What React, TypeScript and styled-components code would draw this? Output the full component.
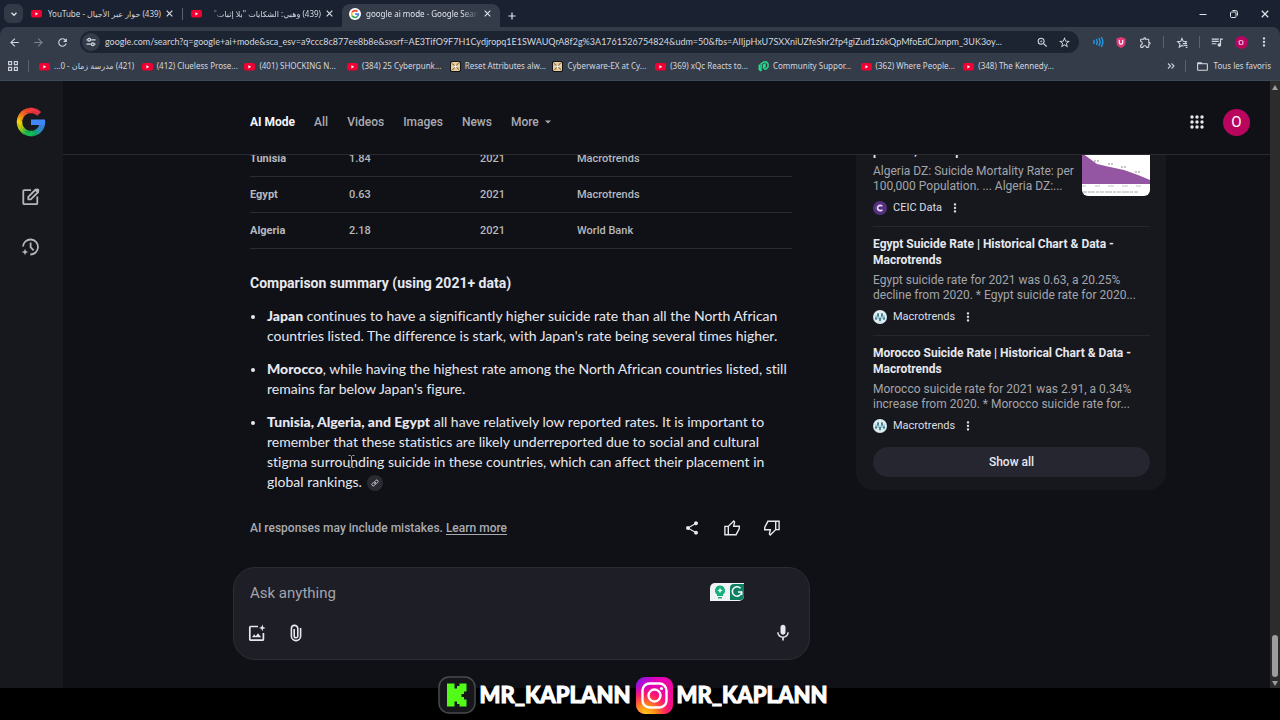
import React from "react";
import styled, { createGlobalStyle, css } from "styled-components";
import {
  MdArrowBack,
  MdArrowForward,
  MdFolderOpen,
  MdMic,
  MdMoreVert,
  MdOutlineExtension,
  MdQueueMusic,
  MdRefresh,
  MdShare,
  MdStarBorder,
  MdZoomIn,
} from "react-icons/md";

const chromeFont = '"Noto Sans", "DejaVu Sans", sans-serif';
const addressFont = "Lato, sans-serif";
const pageFont = 'Roboto, "Liberation Sans", sans-serif';
const articleFont = "Lato, sans-serif";

const GlobalStyle = createGlobalStyle`
  * { box-sizing: border-box; }
  body { margin: 0; background: #000; color: #e6e8f0; font-family: ${pageFont}; }
  button { border: 0; padding: 0; background: none; color: inherit; font: inherit; cursor: pointer; }
  a { color: inherit; text-decoration: none; }
  ul, h2, h3, p { margin: 0; padding: 0; }
  svg { display: block; flex: none; }
`;

const Screen = styled.div`
  position: relative;
  display: flex;
  flex-direction: column;
  min-height: 100vh;
  padding-bottom: 32px;
  overflow: hidden;
`;

/* ---------- browser chrome ---------- */

const BrowserChrome = styled.header`
  background: #1a2231;
  color: #d3d7df;
  font-family: ${chromeFont};
  font-size: 8px;
  line-height: 14px;
`;

const TabStrip = styled.div`
  display: flex;
  align-items: flex-end;
  height: 27px;
  padding-left: 4px;
`;

const TabSearch = styled.button`
  display: grid;
  place-items: center;
  width: 19px;
  height: 19px;
  margin-bottom: 4px;
  border-radius: 6px;
  background: #323a47;
`;

const Tab = styled.div<{ $active?: boolean }>`
  display: flex;
  align-items: center;
  gap: 5px;
  width: ${(p) => (p.$active ? 158 : 159)}px;
  height: 23px;
  padding: 0 9px 4px 8px;
  border-radius: 8px 8px 0 0;
  ${(p) =>
    p.$active &&
    css`
      padding-left: 7px;
      background: #343c4a;
      color: #e2e5ec;
    `}
`;

const TabTitle = styled.span<{ $fade?: "left" | "right" }>`
  flex: 1;
  min-width: 0;
  overflow: hidden;
  white-space: nowrap;
  ${(p) =>
    p.$fade &&
    css`
      mask-image: linear-gradient(to ${p.$fade}, #000 85%, transparent);
    `}
`;

const IconButton = styled.button<{ $size?: number }>`
  display: grid;
  place-items: center;
  flex: none;
  width: ${(p) => p.$size ?? 24}px;
  height: ${(p) => p.$size ?? 24}px;
`;

const WindowControls = styled.div`
  display: flex;
  align-items: center;
  gap: 17px;
  margin: 0 8px 6px auto;
`;

const Toolbar = styled.div`
  display: flex;
  align-items: center;
  height: 30px;
  padding: 0 5px 0 2px;
  border-radius: 8px 8px 0 0;
  background: #343c4a;
`;

const AddressBar = styled.div`
  display: flex;
  align-items: center;
  flex: 1;
  min-width: 0;
  height: 22px;
  margin: 0 8px 0 6px;
  padding: 0 4px 0 2px;
  border-radius: 11px;
  background: #1c2432;
`;

const SiteInfo = styled.button`
  display: grid;
  place-items: center;
  width: 18px;
  height: 18px;
  margin-right: 5px;
  border-radius: 50%;
  background: #343c4a;
`;

const Address = styled.input`
  flex: 1;
  min-width: 0;
  margin-right: 5px;
  padding: 0;
  border: 0;
  outline: 0;
  background: none;
  color: #d3d7df;
  font: 9px/16px ${addressFont};
  font-variant-ligatures: none;
  text-overflow: ellipsis;
`;

const Separator = styled.span<{ $gap?: number }>`
  flex: none;
  width: 1px;
  height: 12px;
  margin: 0 ${(p) => p.$gap ?? 6}px;
  background: #5a6270;
`;

const TabSeparator = styled(Separator)`
  margin: 0 0 7px;
`;

const ProfileDot = styled.button<{ $large?: boolean }>`
  display: grid;
  place-items: center;
  flex: none;
  width: ${(p) => (p.$large ? 27 : 13)}px;
  height: ${(p) => (p.$large ? 27 : 13)}px;
  border-radius: 50%;
  background: #b9055e;
  color: #fff;
  font: ${(p) => (p.$large ? "15px" : "8px")} ${pageFont};
`;

const BookmarksBar = styled.nav`
  display: flex;
  align-items: center;
  height: 24px;
  padding: 0 9px 5px 8px;
  border-bottom: 1px solid #3d4858;
  background: #343c4a;
`;

const BookmarkList = styled.div`
  display: grid;
  grid-template-columns: repeat(10, minmax(0, 1fr));
  flex: 0 1 1027px;
`;

const Bookmark = styled.a`
  display: flex;
  align-items: center;
  gap: 4px;
  min-width: 0;
  white-space: nowrap;
`;

const BookmarkTools = styled.div`
  display: flex;
  align-items: center;
  gap: 5px;
  margin-left: auto;
`;

/* ---------- page ---------- */

const Page = styled.div`
  display: flex;
  flex: 1;
  min-height: 0;
  background: #101116;
`;

const Rail = styled.nav`
  display: flex;
  flex-direction: column;
  align-items: center;
  width: 63px;
  padding: 26px 2px 0 0;
  background: #17181d;
  color: #b4b6bd;
`;

const RailButton = styled(IconButton)`
  margin-top: 26px;
`;

const RailLogo = styled.a`
  margin-bottom: 22px;
`;

const Content = styled.div`
  display: flex;
  flex-direction: column;
  flex: 1;
  min-width: 0;
`;

const SearchHeader = styled.header`
  display: flex;
  align-items: center;
  height: 74px;
  padding: 9px 20px 0 187px;
  border-bottom: 1px solid #292b30;
`;

const SearchTabs = styled.nav`
  display: flex;
  gap: 19px;
  margin-right: auto;
  color: #a9abb2;
  font-size: 12px;
  line-height: 16px;
`;

const SearchTab = styled.a<{ $active?: boolean }>`
  display: flex;
  align-items: center;
  gap: 6px;
  color: ${(p) => (p.$active ? "#f4f5fa" : "inherit")};
  font-weight: ${(p) => (p.$active ? 700 : 500)};
`;

const HeaderTools = styled.div`
  display: flex;
  align-items: center;
  gap: 14px;
`;

const Results = styled.main`
  display: grid;
  grid-template-columns: minmax(0, 1fr) 310px;
  align-items: start;
  gap: 46px;
  flex: 1;
  padding: 0 104px 28px 170px;
  overflow: hidden;
`;

const Answer = styled.article`
  margin-top: -15px;
`;

const AnswerBody = styled.div`
  padding: 0 18px 0 17px;
`;

const RateTable = styled.table`
  width: 100%;
  border-collapse: collapse;
  table-layout: fixed;
  color: #b6b8bf;
  font-size: 11px;
  line-height: 14px;
  text-align: left;

  th,
  td {
    height: 36px;
    padding: 2px 0 0;
    border-bottom: 1px solid #2a2c31;
    font-weight: 500;
  }
  th { font-weight: 700; }
`;

const Column = styled.col<{ $width?: number }>`
  width: ${(p) => (p.$width ? `${p.$width}px` : "auto")};
`;

const Heading = styled.h2`
  margin-top: 24px;
  font: 700 14px/20px ${pageFont};
`;

const Points = styled.ul`
  display: flex;
  flex-direction: column;
  gap: 13px;
  margin-top: 13px;
  padding-left: 17px;
  font: 14px/20px ${articleFont};
  font-variant-ligatures: none;
  list-style: none;

  b { font-weight: 900; }
`;

const Point = styled.li`
  position: relative;

  &::before {
    content: "";
    position: absolute;
    top: 9px;
    left: -16px;
    width: 4px;
    height: 4px;
    border-radius: 50%;
    background: #e6e8f0;
  }
`;

const LinkChip = styled.button`
  display: inline-grid;
  place-items: center;
  width: 16px;
  height: 16px;
  margin-left: 5px;
  border-radius: 50%;
  background: #292a32;
  vertical-align: middle;
`;

const TextCursor = styled.svg`
  position: absolute;
  top: 43px;
  left: 81px;
`;

const Feedback = styled.div`
  display: flex;
  align-items: center;
  justify-content: space-between;
  margin: 24px 0 27px;
  padding-right: 8px;
  color: #a9abb2;
  font-size: 12px;
  font-weight: 500;
  line-height: 16px;

  a { text-decoration: underline; text-underline-offset: 2px; }
`;

const FeedbackActions = styled.div`
  display: flex;
  gap: 16px;
  color: #e6e8f0;
`;

const Composer = styled.form`
  display: flex;
  flex-direction: column;
  justify-content: space-between;
  height: 93px;
  padding: 13px 14px 14px 11px;
  border: 1px solid #2b2c35;
  border-radius: 22px;
  background: #1e1e27;
`;

const ComposerRow = styled.div`
  display: flex;
  align-items: center;
  gap: 15px;
`;

const Prompt = styled.input`
  flex: 1;
  min-width: 0;
  height: 24px;
  padding: 0 0 0 5px;
  border: 0;
  outline: 0;
  background: none;
  color: #e6e8f0;
  font: 15px/24px ${pageFont};

  &::placeholder { color: #a3a4ae; opacity: 1; }
`;

const WritingBadge = styled.button`
  display: flex;
  align-items: center;
  gap: 4px;
  height: 18px;
  margin: 0 51px 2px 0;
  padding-left: 4px;
  border-radius: 5px 0 5px 0;
  background: #f1f3f4;
  overflow: hidden;
`;

const MicButton = styled(IconButton)`
  margin-left: auto;
`;

/* ---------- sources ---------- */

const Sources = styled.aside`
  margin-top: -12px;
  padding: 0 16px 13px 17px;
  border-radius: 0 0 18px 18px;
  background: #17181d;
`;

const Source = styled.section`
  display: flex;
  justify-content: space-between;
  padding-bottom: 11px;

  & + & {
    padding-top: 9px;
    border-top: 1px solid #25272c;
  }
`;

const SourceText = styled.div<{ $narrow?: boolean }>`
  min-width: 0;
  width: ${(p) => (p.$narrow ? "204px" : "100%")};
`;

const SourceTitle = styled.h3`
  font-size: 12px;
  font-weight: 700;
  line-height: 16px;
`;

const SourceSnippet = styled.p`
  margin-top: 5px;
  color: #a3a5ac;
  font-size: 12px;
  line-height: 15px;
`;

const SourceSite = styled.div`
  display: flex;
  align-items: center;
  gap: 6px;
  height: 14px;
  margin-top: 7px;
  color: #dcdee6;
  font-size: 11px;
  line-height: 14px;
`;

const Thumbnail = styled.svg`
  border-radius: 0 0 6px 6px;
`;

const ShowAll = styled.button`
  display: block;
  width: 100%;
  height: 30px;
  margin-top: 3px;
  border-radius: 15px;
  background: #25262f;
  font-size: 12px;
  font-weight: 500;
`;

/* ---------- scroll bar and stream banner ---------- */

const ScrollTrack = styled.div`
  display: flex;
  flex-direction: column;
  align-items: center;
  width: 10px;
  padding: 4px 0 2px;
  background: #2c2c2d;
`;

const ScrollThumb = styled.div`
  width: 6px;
  height: 42px;
  margin: auto 0 4px;
  border-radius: 3px;
  background: #9d9d9e;
`;

const StreamBanner = styled.footer`
  position: absolute;
  right: 14px;
  bottom: 6px;
  left: 0;
  display: flex;
  align-items: center;
  justify-content: center;
  gap: 4px;
  color: #fff;
  font: 900 22px/38px Lato, sans-serif;
  -webkit-text-stroke: 1px #fff;
`;

const Handle = styled.span`
  width: 152px;
  white-space: nowrap;
`;

/* ---------- drawings ---------- */

const YouTubeIcon = () => (
  <svg width="11" height="9" viewBox="0 0 11 9" aria-hidden="true">
    <rect y="1" width="11" height="7.6" rx="2" fill="#f00033" />
    <path d="M4.4 3.2v3.2L7.2 4.8z" fill="#fff" />
  </svg>
);

const NexusIcon = () => (
  <svg width="11" height="11" viewBox="0 0 11 11" aria-hidden="true">
    <rect width="11" height="11" rx="2" fill="#151515" />
    <rect x="1" y="1" width="9" height="9" rx="1.5" fill="#e8cd9c" />
    <path d="M2 2.500l3.500 3 3-3.500M9 8.500l-3.500-3-3 3.500" stroke="#5b4020" strokeWidth=".9" fill="none" />
    <circle cx="5.500" cy="5.500" r="1.300" fill="#fff" />
  </svg>
);

const PortalIcon = () => (
  <svg width="11" height="11" viewBox="0 0 11 11" fill="none" stroke="#1fe08c" strokeWidth="1.500" aria-hidden="true">
    <path d="M3 10V2.800L6 1h2.500L10 3v3L8 8H6M5.500 7.800V4l1.500-.8v3.300M1.300 3.500v5L3 10" />
  </svg>
);

const GoogleFavicon = () => (
  <svg width="12" height="12" viewBox="0 0 12 12" fill="none" strokeWidth="1.700" aria-hidden="true">
    <circle cx="6" cy="6" r="6" fill="#fff" />
    <path d="M8.500 3.600A3.400 3.400 0 0 0 3.100 4.200" stroke="#ea4335" />
    <path d="M3.100 4.200a3.400 3.400 0 0 0 0 3.600" stroke="#fbbc05" />
    <path d="M3.100 7.800a3.400 3.400 0 0 0 5.100.9" stroke="#34a853" />
    <path d="M8.200 8.700A3.400 3.400 0 0 0 9.400 6.100H6.100" stroke="#4285f4" />
  </svg>
);

const logoStops: [number, number[]][] = [
  [45, [240, 52, 78]],
  [100, [250, 60, 55]],
  [140, [255, 120, 30]],
  [175, [255, 210, 10]],
  [210, [190, 215, 20]],
  [245, [25, 195, 80]],
  [285, [20, 185, 95]],
  [325, [50, 140, 230]],
  [368, [65, 135, 250]],
];

function logoColor(angle: number) {
  const i = Math.max(1, logoStops.findIndex(([a]) => a >= angle));
  const [a0, c0] = logoStops[i - 1];
  const [a1, c1] = logoStops[i];
  const t = (angle - a0) / (a1 - a0);
  return `rgb(${c0.map((c, k) => Math.round(c + (c1[k] - c) * t)).join(",")})`;
}

const LOGO_STEP = 5;
const logoArcs = Array.from({ length: 64 }, (_, i) => 45 + i * LOGO_STEP).map((start) => {
  const at = (deg: number) => {
    const r = (deg * Math.PI) / 180;
    return `${(15 + 11.5 * Math.cos(r)).toFixed(2)} ${(15 - 11.5 * Math.sin(r)).toFixed(2)}`;
  };
  const end = Math.min(start + LOGO_STEP + 1, 366);
  return { d: `M${at(start)}A11.5 11.5 0 0 0 ${at(end)}`, color: logoColor(Math.min(start + 2, 366)) };
});

const GoogleLogo = () => (
  <svg width="30" height="30" viewBox="0 0 30 30" aria-hidden="true">
    {logoArcs.map((arc) => (
      <path key={arc.d} d={arc.d} fill="none" stroke={arc.color} strokeWidth="5.400" />
    ))}
    <path d="M15 12.500h14v3l-1 2.500H15z" fill="#4187fa" />
  </svg>
);

const EditIcon = () => (
  <svg width="20" height="20" viewBox="0 0 20 20" fill="none" stroke="currentColor" strokeWidth="1.800" aria-hidden="true">
    <path d="M10 3.200H3.300a1 1 0 0 0-1 1v12a1 1 0 0 0 1 1h12a1 1 0 0 0 1-1V9.500" />
    <path d="M7.300 12.400V9.900l7.400-7.400 2.500 2.500-7.400 7.400z" strokeLinejoin="round" />
    <path d="m13.700 3.600 1.500-1.500a1.500 1.500 0 0 1 2.600 2.500l-1.500 1.500z" fill="currentColor" stroke="none" />
  </svg>
);

const HistoryIcon = () => (
  <svg width="20" height="20" viewBox="0 0 20 20" fill="none" stroke="currentColor" strokeWidth="1.800" aria-hidden="true">
    <path d="M2 9.500A7.500 7.500 0 1 1 9.300 17.500" />
    <path d="M9.600 5.500v4.700l3 3.200" />
    <path d="M4 11.800l.9 2.300 2.300.9-2.300.9-.9 2.300-.9-2.300-2.300-.9 2.300-.9z" fill="currentColor" stroke="none" />
  </svg>
);

const AppsIcon = () => (
  <svg width="14" height="14" viewBox="0 0 14 14" fill="#e6e8f0" aria-hidden="true">
    {[2, 7, 12].flatMap((y) => [2, 7, 12].map((x) => <circle key={`${x}-${y}`} cx={x} cy={y} r="1.700" />))}
  </svg>
);

const AddImageIcon = () => (
  <svg width="18" height="18" viewBox="0 0 18 18" fill="none" stroke="#e6e8f0" strokeWidth="1.700" aria-hidden="true">
    <path d="M10 2.500H2.800a1 1 0 0 0-1 1v11.700a1 1 0 0 0 1 1h11.600a1 1 0 0 0 1-1V9" />
    <path d="M4 13.200l2.200-3 1.500 2 2.300-3 3.200 4z" fill="#e6e8f0" stroke="none" />
    <path d="M14.300.6l.9 2.400 2.400.9-2.400.9-.9 2.400-.9-2.400-2.400-.9 2.400-.9z" fill="#e6e8f0" stroke="none" />
  </svg>
);

const AttachIcon = () => (
  <svg width="20" height="20" viewBox="0 0 20 20" fill="none" stroke="#e6e8f0" strokeWidth="1.600" aria-hidden="true">
    <path d="M14.600 5v8a4.600 4.600 0 0 1-9.200 0V5.600a3.200 3.200 0 0 1 6.400 0V13a1.800 1.800 0 0 1-3.600 0V6" />
  </svg>
);

const ThumbIcon = ({ down }: { down?: boolean }) => (
  <svg width="18" height="18" viewBox="0 0 18 18" fill="none" stroke="currentColor" strokeWidth="1.400" aria-hidden="true">
    <path
      transform={down ? "rotate(180 9 9)" : undefined}
      d="M5.300 7.400v8.300M5.300 7.400H1.900v8.300h11.200l3.200-6.100V7.200h-5.600l.9-4.300-.9-1z"
    />
  </svg>
);

const LinkIcon = () => (
  <svg width="10" height="10" viewBox="0 0 10 10" fill="none" stroke="#c9cbd3" strokeWidth="1" strokeLinecap="round" aria-hidden="true">
    <path d="M4.400 5.800a1.500 1.500 0 0 1 0-2l1.300-1.300a1.400 1.400 0 0 1 2 2L6.900 5.300M5.600 4.200a1.500 1.500 0 0 1 0 2L4.300 7.500a1.400 1.400 0 0 1-2-2l.8-.8" />
  </svg>
);

const CloseIcon = ({ size = 7 }: { size?: number }) => (
  <svg width={size} height={size} viewBox="0 0 7 7" stroke="#dfe2e8" strokeWidth="1.100" aria-hidden="true">
    <path d="M.7.7l5.600 5.600M6.300.7L.7 6.300" />
  </svg>
);

const TuneIcon = () => (
  <svg width="10" height="10" viewBox="0 0 10 10" fill="none" stroke="#d5d9e0" strokeWidth="1.200" aria-hidden="true">
    <path d="M.5 2.800h1.300M5 2.800h0M5.200 2.800H9.500M.5 7.200h4.300M8.300 7.200h1.200" />
    <circle cx="3.200" cy="2.800" r="1.400" />
    <circle cx="6.800" cy="7.200" r="1.400" />
  </svg>
);

const MacrotrendsIcon = () => (
  <svg width="14" height="14" viewBox="0 0 14 14" aria-hidden="true">
    <circle cx="7" cy="7" r="7" fill="#dcecf1" />
    <path d="M3 5.500v4.500M5 3v6M7 6.500v5M9 3v6M11 5.500v4.500" stroke="#7cc0d2" strokeWidth="1.400" />
    <path d="M5 3.500v3M9 3.500v3M7 8v3M3 7.500v2M11 7.500v2" stroke="#24414d" strokeWidth="1.100" />
  </svg>
);

const CeicIcon = () => (
  <svg width="14" height="14" viewBox="0 0 14 14" aria-hidden="true">
    <circle cx="7" cy="7" r="7" fill="#55307d" />
    <path d="M9.300 5.300a2.700 2.700 0 1 0 0 3.400" stroke="#e8dcf5" strokeWidth="1.700" fill="none" />
  </svg>
);

const RateChart = () => (
  <Thumbnail width="68" height="53" viewBox="0 0 68 53" role="img" aria-label="Algeria suicide mortality rate chart">
    <rect width="68" height="53" fill="#fff" />
    <path d="M0 10l4 3 11 8 13 3 14 3 14 5 12 5v4H0z" fill="#9456a2" />
    <path d="M12 18h5M26 21h6M39 24h6M53 29h6" stroke="#8b8b8b" strokeWidth="1" strokeDasharray="2 1" />
    <path d="M0 43h4M13 43h5M26 43h6M40 43h6M54 43h5" stroke="#c5c5c5" strokeWidth="1" />
    <path d="M1 49h55" stroke="#aaa" strokeWidth="1" strokeDasharray="4 1 7 1 3 1" />
  </Thumbnail>
);

const KickLogo = () => (
  <svg width="38" height="38" viewBox="0 0 38 38" aria-hidden="true">
    <rect x="1" y="1" width="36" height="36" rx="10" fill="#15171b" stroke="#47494d" strokeWidth="1.500" />
    <path d="M9 7.500h7.500v5H19V10h2.500V7.500h7v8H26V18h-2.500v3H26v2.500h2.500v7h-7V28H19v-2.500h-2.500v5H9z" fill="#53fc18" />
  </svg>
);

const InstagramLogo = () => (
  <svg width="37" height="37" viewBox="0 0 37 37" fill="none" aria-hidden="true">
    <defs>
      <linearGradient id="ig-base" x1="0" y1="0" x2="1" y2="0.700">
        <stop offset="0" stopColor="#7a1bf0" />
        <stop offset="0.400" stopColor="#e400b8" />
        <stop offset="1" stopColor="#f0108a" />
      </linearGradient>
      <radialGradient id="ig-glow" cx="0.250" cy="1.050" r="0.850">
        <stop offset="0" stopColor="#ffd21f" />
        <stop offset="0.350" stopColor="#ff8a17" />
        <stop offset="0.700" stopColor="#ff2358" stopOpacity="0.800" />
        <stop offset="1" stopColor="#ff0090" stopOpacity="0" />
      </radialGradient>
    </defs>
    <rect width="37" height="37" rx="9" fill="url(#ig-base)" />
    <rect width="37" height="37" rx="9" fill="url(#ig-glow)" />
    <rect x="6.500" y="6.500" width="24" height="24" rx="7" stroke="#fff" strokeWidth="2.400" />
    <circle cx="18.500" cy="18.500" r="6" stroke="#fff" strokeWidth="2.400" />
    <circle cx="25.500" cy="11.500" r="1.600" fill="#fff" />
  </svg>
);

/* ---------- data ---------- */

const bookmarks: { icon: React.ReactNode; label: string; rtl?: boolean }[] = [
  { icon: <YouTubeIcon />, label: "(421) مدرسة زمان - 0...", rtl: true },
  { icon: <YouTubeIcon />, label: "(412) Clueless Prose..." },
  { icon: <YouTubeIcon />, label: "(401) SHOCKING N..." },
  { icon: <YouTubeIcon />, label: "(384) 25 Cyberpunk..." },
  { icon: <NexusIcon />, label: "Reset Attributes alw..." },
  { icon: <NexusIcon />, label: "Cyberware-EX at Cy..." },
  { icon: <YouTubeIcon />, label: "(369) xQc Reacts to..." },
  { icon: <PortalIcon />, label: "Community Suppor..." },
  { icon: <YouTubeIcon />, label: "(362) Where People..." },
  { icon: <YouTubeIcon />, label: "(348) The Kennedy..." },
];

const rates = [
  ["Tunisia", "1.84", "2021", "Macrotrends"],
  ["Egypt", "0.63", "2021", "Macrotrends"],
  ["Algeria", "2.18", "2021", "World Bank"],
];

const sources = [
  {
    title: "per 100,000 Population",
    snippet: "Algeria DZ: Suicide Mortality Rate: per 100,000 Population. ... Algeria DZ:...",
    site: "CEIC Data",
    icon: <CeicIcon />,
    chart: true,
  },
  {
    title: "Egypt Suicide Rate | Historical Chart & Data - Macrotrends",
    snippet: "Egypt suicide rate for 2021 was 0.63, a 20.25% decline from 2020. * Egypt suicide rate for 2020...",
    site: "Macrotrends",
    icon: <MacrotrendsIcon />,
  },
  {
    title: "Morocco Suicide Rate | Historical Chart & Data - Macrotrends",
    snippet: "Morocco suicide rate for 2021 was 2.91, a 0.34% increase from 2020. * Morocco suicide rate for...",
    site: "Macrotrends",
    icon: <MacrotrendsIcon />,
  },
];

const address =
  "google.com/search?q=google+ai+mode&sca_esv=a9ccc8c877ee8b8e&sxsrf=AE3TifO9F7H1Cydjropq1E1SWAUQrA8f2g%3A1761526754824&udm=50&fbs=AIIjpHxU7SXXniUZfeShr2fp4giZud1z6kQpMfoEdCJxnpm_3UK3oy...";

/* ---------- view ---------- */

const Browser = () => (
  <BrowserChrome>
    <TabStrip>
      <TabSearch aria-label="Search tabs">
        <svg width="8" height="8" viewBox="0 0 8 8" fill="none" stroke="#dfe2e8" strokeWidth="1.300"><path d="M1.500 2.800L4 5.300l2.500-2.500" /></svg>
      </TabSearch>
      <Tab>
        <YouTubeIcon />
        <TabTitle dir="rtl">(439) حوار عبر الأجيال - YouTube</TabTitle>
        <CloseIcon />
      </Tab>
      <TabSeparator />
      <Tab>
        <YouTubeIcon />
        <TabTitle dir="rtl" $fade="left">(439) وهبي: الشكايات "بلا إثبات"</TabTitle>
        <CloseIcon />
      </Tab>
      <Tab $active>
        <GoogleFavicon />
        <TabTitle $fade="right">google ai mode - Google Search</TabTitle>
        <CloseIcon />
      </Tab>
      <IconButton $size={23} aria-label="New tab">
        <svg width="8" height="8" viewBox="0 0 8 8" stroke="#dfe2e8" strokeWidth="1.200"><path d="M4 .5v7M.5 4h7" /></svg>
      </IconButton>
      <WindowControls>
        <IconButton $size={14} aria-label="Minimize">
          <svg width="8" height="8" viewBox="0 0 8 8" stroke="#dfe2e8"><path d="M.5 4.500h7" /></svg>
        </IconButton>
        <IconButton $size={14} aria-label="Restore">
          <svg width="8" height="8" viewBox="0 0 8 8" fill="none" stroke="#dfe2e8"><rect x=".5" y="2" width="5.500" height="5.500" rx="1" /><path d="M2.500.500h3a2 2 0 0 1 2 2v3" /></svg>
        </IconButton>
        <IconButton $size={14} aria-label="Close"><CloseIcon size={8} /></IconButton>
      </WindowControls>
    </TabStrip>
    <Toolbar>
      <IconButton aria-label="Back"><MdArrowBack size={13} /></IconButton>
      <IconButton aria-label="Forward" disabled><MdArrowForward size={13} color="#7b8290" /></IconButton>
      <IconButton aria-label="Reload"><MdRefresh size={13} /></IconButton>
      <AddressBar>
        <SiteInfo aria-label="Site information"><TuneIcon /></SiteInfo>
        <Address aria-label="Address" defaultValue={address} />
        <IconButton $size={22} aria-label="Zoom"><MdZoomIn size={13} /></IconButton>
        <IconButton $size={22} aria-label="Bookmark this page"><MdStarBorder size={13} /></IconButton>
      </AddressBar>
      <IconButton $size={22} aria-label="Read aloud">
        <svg width="12" height="12" viewBox="0 0 12 12" fill="none" stroke="#1f9be8" strokeWidth="1.400" strokeLinecap="round"><path d="M2 4.500v3M4.500 3.500q1.500 2.500 0 5M7 2.500q2.200 3.500 0 7M9.500 1.500q2.700 4.500 0 9" /></svg>
      </IconButton>
      <IconButton aria-label="Shield extension">
        <svg width="10" height="11" viewBox="0 0 10 11"><path d="M5 0l4.500 1.500v4Q9.500 9 5 11 .5 9 .5 5.500v-4z" fill="#e23a78" /><path d="M3.300 3v2.500a1.700 1.700 0 0 0 3.400 0V3" fill="none" stroke="#fff" strokeWidth="1.200" /></svg>
      </IconButton>
      <IconButton aria-label="Extensions"><MdOutlineExtension size={13} /></IconButton>
      <Separator $gap={6} />
      <IconButton aria-label="Collections">
        <svg width="13" height="13" viewBox="0 0 24 24" fill="none" stroke="currentColor" strokeWidth="2"><path d="M14 19l-3-1.600-5 3 1.300-5.800L3 10.500l5.800-.6L11 4.500l2.300 5.400 5.700.6-2 2M12.500 14h8M15 17.500h6M18 21h3" /></svg>
      </IconButton>
      <Separator $gap={5} />
      <IconButton aria-label="Media controls"><MdQueueMusic size={14} /></IconButton>
      <IconButton aria-label="Profile"><ProfileDot as="span">O</ProfileDot></IconButton>
      <IconButton $size={22} aria-label="Menu"><MdMoreVert size={14} /></IconButton>
    </Toolbar>
    <BookmarksBar aria-label="Bookmarks">
      <svg width="10" height="10" viewBox="0 0 10 10" fill="none" stroke="#c9ced8" strokeWidth="1.200"><path d="M.6.6h3v3h-3zM6.400.6h3v3h-3zM.6 6.400h3v3h-3zM6.400 6.400h3v3h-3z" /></svg>
      <Separator $gap={10} />
      <BookmarkList>
        {bookmarks.map((b) => (
          <Bookmark key={b.label} href="#">
            {b.icon}
            <span dir={b.rtl ? "rtl" : "ltr"}>{b.label}</span>
          </Bookmark>
        ))}
      </BookmarkList>
      <BookmarkTools>
        <svg width="8" height="8" viewBox="0 0 8 8" fill="none" stroke="#c9ced8" strokeWidth="1.100"><path d="M1 1.500L3.500 4 1 6.500M4.500 1.500L7 4 4.500 6.500" /></svg>
        <Separator $gap={5} />
        <MdFolderOpen size={13} />
        <span>Tous les favoris</span>
      </BookmarkTools>
    </BookmarksBar>
  </BrowserChrome>
);

const SourceList = () => (
  <Sources aria-label="Sources">
    {sources.map((s) => (
      <Source key={s.title}>
        <SourceText $narrow={s.chart}>
          <SourceTitle>{s.title}</SourceTitle>
          <SourceSnippet>{s.snippet}</SourceSnippet>
          <SourceSite>
            {s.icon}
            <span>{s.site}</span>
            <IconButton $size={14} aria-label={`More about ${s.site}`}><MdMoreVert size={14} /></IconButton>
          </SourceSite>
        </SourceText>
        {s.chart && <RateChart />}
      </Source>
    ))}
    <ShowAll>Show all</ShowAll>
  </Sources>
);

export default function App() {
  return (
    <Screen>
      <GlobalStyle />
      <Browser />
      <Page>
        <Rail aria-label="AI Mode">
          <RailLogo href="#" aria-label="Google"><GoogleLogo /></RailLogo>
          <RailButton aria-label="New thread"><EditIcon /></RailButton>
          <RailButton aria-label="History"><HistoryIcon /></RailButton>
        </Rail>
        <Content>
          <SearchHeader>
            <SearchTabs>
              <SearchTab href="#" $active>AI Mode</SearchTab>
              <SearchTab href="#">All</SearchTab>
              <SearchTab href="#">Videos</SearchTab>
              <SearchTab href="#">Images</SearchTab>
              <SearchTab href="#">News</SearchTab>
              <SearchTab href="#">
                More
                <svg width="6" height="4" viewBox="0 0 6 4" fill="#a9abb2"><path d="M0 .5h6L3 3.500z" /></svg>
              </SearchTab>
            </SearchTabs>
            <HeaderTools>
              <IconButton aria-label="Google apps"><AppsIcon /></IconButton>
              <ProfileDot $large aria-label="Google account">O</ProfileDot>
            </HeaderTools>
          </SearchHeader>
          <Results>
            <Answer>
              <AnswerBody>
                <RateTable>
                  <colgroup>
                    <Column $width={99} />
                    <Column $width={131} />
                    <Column $width={97} />
                    <Column />
                  </colgroup>
                  <tbody>
                    {rates.map(([country, ...cells]) => (
                      <tr key={country}>
                        <th scope="row">{country}</th>
                        {cells.map((c) => (
                          <td key={c}>{c}</td>
                        ))}
                      </tr>
                    ))}
                  </tbody>
                </RateTable>
                <Heading>Comparison summary (using 2021+ data)</Heading>
                <Points>
                  <Point>
                    <b>Japan</b> continues to have a significantly higher suicide rate than all the North African
                    countries listed. The difference is stark, with Japan's rate being several times higher.
                  </Point>
                  <Point>
                    <b>Morocco</b>, while having the highest rate among the North African countries listed, still
                    remains far below Japan's figure.
                  </Point>
                  <Point>
                    <b>Tunisia, Algeria, and Egypt</b> all have relatively low reported rates. It is important to
                    remember that these statistics are likely underreported due to social and cultural stigma
                    surrounding suicide in these countries, which can affect their placement in global rankings.
                    <LinkChip aria-label="View source"><LinkIcon /></LinkChip>
                    <TextCursor width="7" height="13" viewBox="0 0 7 13" fill="none" stroke="#9a9ca3" aria-hidden="true">
                      <path d="M.5.500h2l1 1 1-1h2M3.500 1.500v10M.5 12.500h2l1-1 1 1h2" />
                    </TextCursor>
                  </Point>
                </Points>
                <Feedback>
                  <p>AI responses may include mistakes. <a href="#">Learn more</a></p>
                  <FeedbackActions>
                    <IconButton aria-label="Share"><MdShare size={16} /></IconButton>
                    <IconButton aria-label="Good response"><ThumbIcon /></IconButton>
                    <IconButton aria-label="Bad response"><ThumbIcon down /></IconButton>
                  </FeedbackActions>
                </Feedback>
              </AnswerBody>
              <Composer>
                <ComposerRow>
                  <Prompt aria-label="Ask anything" placeholder="Ask anything" />
                  <WritingBadge type="button" aria-label="Writing assistant">
                    <svg width="12" height="14" viewBox="0 0 12 14"><path d="M6 .5a5 5 0 0 0-3 9v1.500h6V9.500a5 5 0 0 0-3-9zM4 12h4v1.500H4z" fill="#15b07c" /><path d="M6 2.800l.8 2 2 .7-2 .8-.8 2-.8-2-2-.8 2-.7z" fill="#fff" /></svg>
                    <svg width="14" height="16" viewBox="0 0 14 16" fill="none"><path d="M0 4q0-4 4-4h10v12q0 4-4 4H0z" fill="#0f7f63" /><path d="M10.500 4.300A4.700 4.700 0 1 0 11.700 8H8M11.700 8v3" stroke="#fff" strokeWidth="1.500" /></svg>
                  </WritingBadge>
                </ComposerRow>
                <ComposerRow>
                  <IconButton type="button" aria-label="Add image"><AddImageIcon /></IconButton>
                  <IconButton type="button" aria-label="Attach file"><AttachIcon /></IconButton>
                  <MicButton type="button" aria-label="Voice input"><MdMic size={20} /></MicButton>
                </ComposerRow>
              </Composer>
            </Answer>
            <SourceList />
          </Results>
        </Content>
        <ScrollTrack aria-hidden="true">
          <svg width="6" height="5" viewBox="0 0 6 5" fill="#9d9d9e"><path d="M0 5h6L3 0z" /></svg>
          <ScrollThumb />
          <svg width="6" height="5" viewBox="0 0 6 5" fill="#9d9d9e"><path d="M0 0h6L3 5z" /></svg>
        </ScrollTrack>
      </Page>
      <StreamBanner>
        <KickLogo />
        <Handle>MR_KAPLANN</Handle>
        <InstagramLogo />
        <Handle>MR_KAPLANN</Handle>
      </StreamBanner>
    </Screen>
  );
}
